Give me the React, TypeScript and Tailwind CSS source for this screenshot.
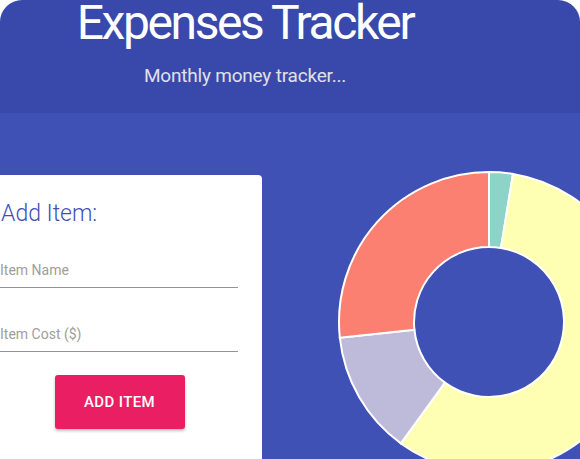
import React from "react";

const segments = [
  { from: 0, to: 9.2, color: "#8dd3c7" },
  { from: 9.2, to: 216, color: "#ffffb3" },
  { from: 216, to: 264, color: "#bebada" },
  { from: 264, to: 360, color: "#fb8072" },
];

function arcPath(cx: number, cy: number, r0: number, r1: number, a0: number, a1: number) {
  const rad = (a: number) => ((a - 90) * Math.PI) / 180;
  const p = (r: number, a: number) => [cx + r * Math.cos(rad(a)), cy + r * Math.sin(rad(a))];
  const large = a1 - a0 > 180 ? 1 : 0;
  const [x1, y1] = p(r1, a0);
  const [x2, y2] = p(r1, a1);
  const [x3, y3] = p(r0, a1);
  const [x4, y4] = p(r0, a0);
  return `M${x1} ${y1} A${r1} ${r1} 0 ${large} 1 ${x2} ${y2} L${x3} ${y3} A${r0} ${r0} 0 ${large} 0 ${x4} ${y4} Z`;
}

function Donut() {
  return (
    <svg width="304" height="304" viewBox="0 0 304 304" className="shrink-0">
      {segments.map((s, i) => (
        <path
          key={i}
          d={arcPath(152, 152, 75, 150, s.from, s.to)}
          fill={s.color}
          stroke="#ffffff"
          strokeWidth="2"
        />
      ))}
    </svg>
  );
}

export default function App() {
  return (
    <div
      className="w-[580px] h-[459px] overflow-hidden bg-white"
      style={{ fontFamily: "Roboto, 'Liberation Sans', sans-serif" }}
    >
      <header className="h-[113px] bg-[#3949ab] rounded-t-[22px] flex flex-col items-center pr-[90px]">
        <h1 className="text-white text-[48px] leading-[44px] mt-[1px] font-normal tracking-[-2.4px] whitespace-nowrap">
          Expenses Tracker
        </h1>
        <p className="text-[#e0e0e8] text-[19px] leading-none mt-[21px] tracking-[-0.2px]">Monthly money tracker...</p>
      </header>
      <main className="h-[346px] bg-[#3f51b5] flex items-start pt-[57px]">
        <section className="mt-[5px] w-[262px] h-[300px] bg-white rounded-tr-[4px] shrink-0 pr-[24px]">
          <h2 className="text-[#3f51b5] text-[23px] font-light leading-none mt-[27px] pl-[1px]">Add Item:</h2>
          <div className="mt-[27px] h-[36px] border-b border-[#949494] flex items-center">
            <span className="text-[#9e9e9e] text-[14px] pt-[2px]">Item Name</span>
          </div>
          <div className="mt-[28px] h-[36px] border-b border-[#949494] flex items-center">
            <span className="text-[#9e9e9e] text-[14px] pt-[2px]">Item Cost ($)</span>
          </div>
          <div className="flex justify-center mt-[23px] pl-[1px]">
            <button className="w-[130px] h-[54px] bg-[#e91e63] text-white text-[15px] font-medium tracking-[0.4px] rounded-[3px] shadow-[0_2px_3px_rgba(0,0,0,0.25)]">
              ADD ITEM
            </button>
          </div>
        </section>
        <div className="ml-[75px]">
          <Donut />
        </div>
      </main>
    </div>
  );
}
